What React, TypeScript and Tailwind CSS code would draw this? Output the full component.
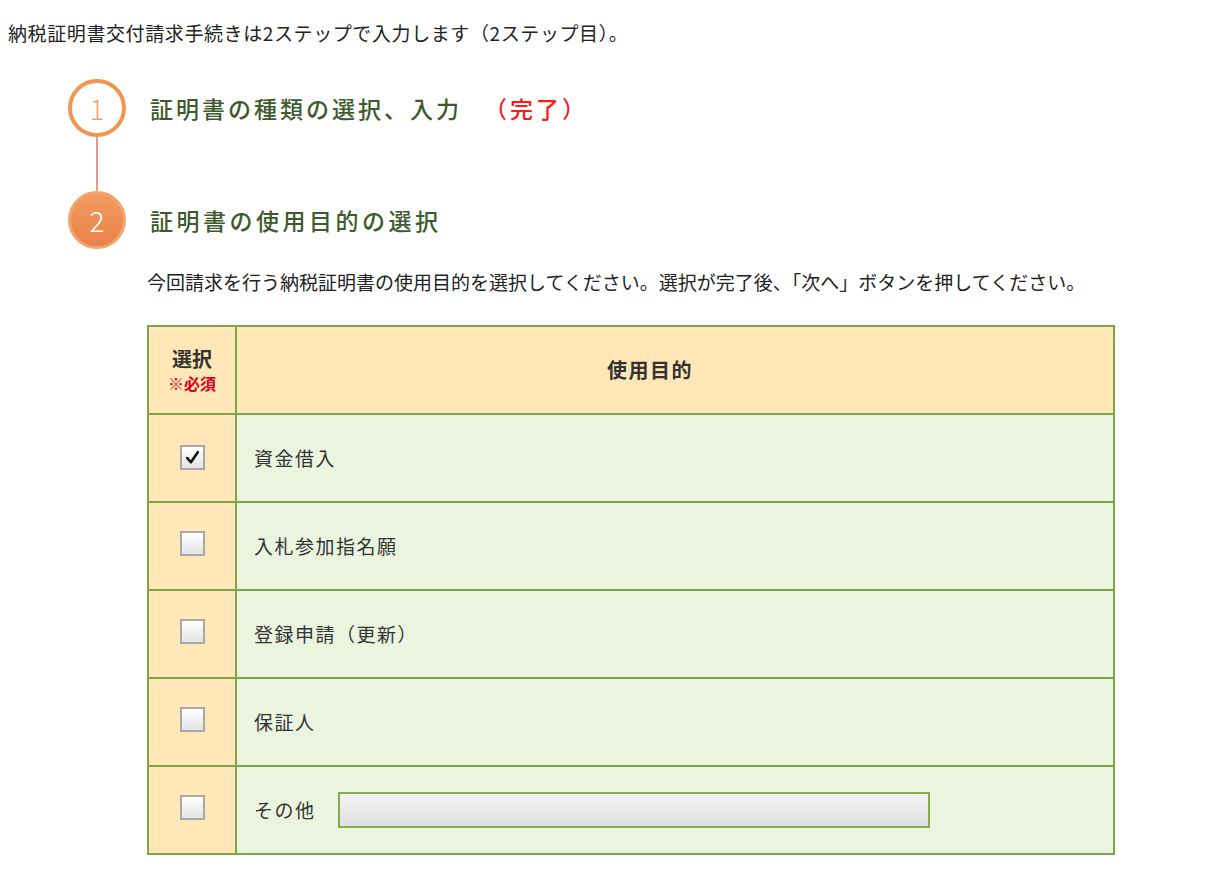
import React from 'react';

const FONT = { fontFamily: '"Noto Sans CJK JP", "Noto Sans", sans-serif' };

const purposes = [
  { label: '資金借入', checked: true },
  { label: '入札参加指名願', checked: false },
  { label: '登録申請（更新）', checked: false },
  { label: '保証人', checked: false },
  { label: 'その他', checked: false, other: true },
];

function Box({ checked }: { checked: boolean }) {
  return (
    <span className="inline-flex items-center justify-center w-[25px] h-[25px] border-2 border-[#a8a8a8] bg-gradient-to-b from-white to-[#e4e4e4]">
      {checked && (
        <svg width="17" height="17" viewBox="0 0 16 16">
          <path d="M3 8.5 L6.5 12.5 L13 3" fill="none" stroke="#111" strokeWidth="2.4" strokeLinecap="round" strokeLinejoin="round" />
        </svg>
      )}
    </span>
  );
}

export default function App() {
  return (
    <div className="w-[1206px] h-[889px] bg-white text-[#333] pt-[20px]" style={FONT}>
      {/* Intro */}
      <p className="pl-[8px] text-[19px] tracking-[0.6px] leading-[26px] text-[#222]">
        納税証明書交付請求手続きは2ステップで入力します（2ステップ目）。
      </p>

      {/* Steps */}
      <div className="mt-[33px] pl-[68px]">
        <div className="flex items-center gap-[24px]">
          <span className="flex items-center justify-center w-[58px] h-[58px] rounded-full border-[4px] border-[#f0964f] bg-white text-[28px] leading-none text-[#f5a070] font-light">
            1
          </span>
          <h3 className="text-[23px] tracking-[3px] text-[#3d5b2b] font-medium">
            証明書の種類の選択、入力
            <span className="ml-[22px] text-[#ff1a1a]">（完了）</span>
          </h3>
        </div>
        <div className="ml-[28px] w-[2px] h-[54px] bg-[#e39a92]" />
        <div className="flex items-center gap-[24px]">
          <span className="flex items-center justify-center w-[58px] h-[58px] rounded-full border-[3px] border-[#f1a56c] bg-gradient-to-b from-[#f29c60] to-[#e8814a] text-[28px] leading-none text-white font-light">
            2
          </span>
          <h3 className="text-[23px] tracking-[3.5px] text-[#3d5b2b] font-medium">証明書の使用目的の選択</h3>
        </div>
      </div>

      {/* Body */}
      <div className="pl-[147px]">
        <p className="mt-[20px] text-[19px] leading-[26px] text-[#222] whitespace-nowrap">
          今回請求を行う納税証明書の使用目的を選択してください。選択が完了後、「次へ」ボタンを押してください。
        </p>

        <table className="mt-[30px] w-[968px] border-collapse">
          <thead>
            <tr className="h-[88px] bg-[#ffe7b8]">
              <th className="w-[88px] border-2 border-[#7ba64a] font-bold text-[20px] leading-[26px] text-[#333]">
                選択
                <div className="text-[16px] leading-[22px] text-[#e0001b] font-bold">※必須</div>
              </th>
              <th className="border-2 border-[#7ba64a] font-bold text-[20px] tracking-[1.5px] text-[#333] pr-[50px]">使用目的</th>
            </tr>
          </thead>
          <tbody>
            {purposes.map((p) => (
              <tr key={p.label} className="h-[88px]">
                <td className="border-2 border-[#7ba64a] bg-[#ffe7b8] text-center align-middle">
                  <Box checked={p.checked} />
                </td>
                <td className="border-2 border-[#7ba64a] bg-[#ebf4df] pl-[17px] text-[19px] tracking-[1.5px] text-[#333]">
                  {p.other ? (
                    <div className="flex items-center gap-[22px]">
                      <span>{p.label}</span>
                      <span className="block w-[592px] h-[36px] border-2 border-[#82ab52] bg-gradient-to-b from-[#f3f3f3] to-[#e0e0e0]" />
                    </div>
                  ) : (
                    p.label
                  )}
                </td>
              </tr>
            ))}
          </tbody>
        </table>
      </div>
    </div>
  );
}
